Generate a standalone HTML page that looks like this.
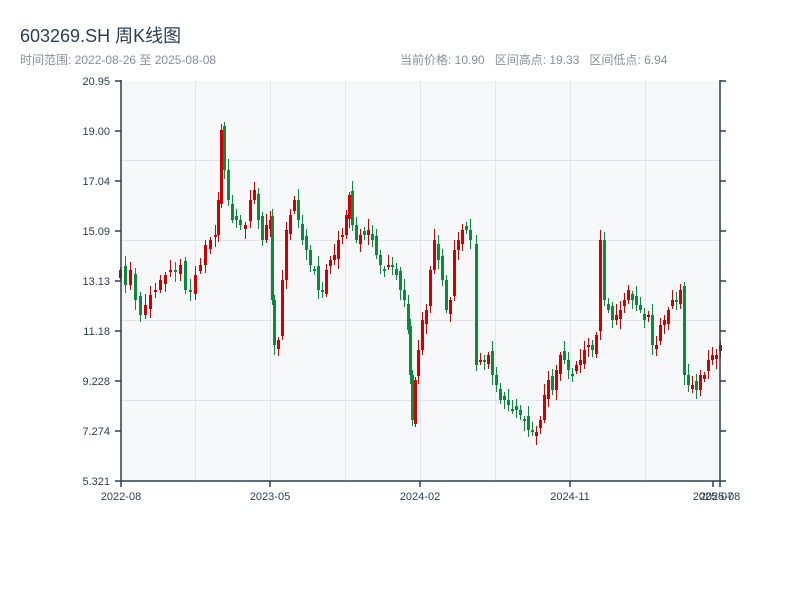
<!DOCTYPE html>
<html><head><meta charset="utf-8"><style>
body{margin:0;width:800px;height:600px;background:#fff;overflow:hidden;font-family:"Liberation Sans","Noto Sans CJK SC",sans-serif;}
.t{position:absolute;left:20px;top:22px;font-size:18px;color:#2c3e50;}
.s{position:absolute;left:20px;top:51px;font-size:12px;color:#8a9099;}
.r{position:absolute;left:400px;top:51px;font-size:12px;color:#8a9099;}
svg{position:absolute;left:0;top:0;}
</style></head><body>
<div class="t">603269.SH 周K线图</div>
<div class="s">时间范围: 2022-08-26 至 2025-08-08</div>
<div class="r">当前价格: 10.90&nbsp;&nbsp; 区间高点: 19.33&nbsp;&nbsp; 区间低点: 6.94</div>
<svg id="c" width="800" height="600" xmlns="http://www.w3.org/2000/svg" font-family="Liberation Sans, sans-serif" font-size="11">
<rect x="121" y="81" width="599" height="400" fill="#f7f8fa"/>
<g stroke="#e2e5ea" stroke-width="1">
<line x1="195.5" y1="81" x2="195.5" y2="481"/><line x1="270.5" y1="81" x2="270.5" y2="481"/><line x1="345.5" y1="81" x2="345.5" y2="481"/><line x1="420.5" y1="81" x2="420.5" y2="481"/><line x1="495.5" y1="81" x2="495.5" y2="481"/><line x1="570.5" y1="81" x2="570.5" y2="481"/><line x1="645.5" y1="81" x2="645.5" y2="481"/>
<line x1="121" y1="160.5" x2="720" y2="160.5"/><line x1="121" y1="240.5" x2="720" y2="240.5"/><line x1="121" y1="320.5" x2="720" y2="320.5"/><line x1="121" y1="400.5" x2="720" y2="400.5"/>
</g>
<g id="k"></g>
<g stroke="#2c3e50" stroke-width="1.5" fill="none">
<line x1="121" y1="80" x2="121" y2="481"/><line x1="720" y1="80" x2="720" y2="481"/><line x1="115" y1="481" x2="726" y2="481"/>
<line x1="115" y1="81" x2="121" y2="81"/><line x1="115" y1="131" x2="121" y2="131"/><line x1="115" y1="181" x2="121" y2="181"/><line x1="115" y1="231" x2="121" y2="231"/><line x1="115" y1="281" x2="121" y2="281"/><line x1="115" y1="331" x2="121" y2="331"/><line x1="115" y1="381" x2="121" y2="381"/><line x1="115" y1="431" x2="121" y2="431"/>
<line x1="720" y1="81" x2="726" y2="81"/><line x1="720" y1="131" x2="726" y2="131"/><line x1="720" y1="181" x2="726" y2="181"/><line x1="720" y1="231" x2="726" y2="231"/><line x1="720" y1="281" x2="726" y2="281"/><line x1="720" y1="331" x2="726" y2="331"/><line x1="720" y1="381" x2="726" y2="381"/><line x1="720" y1="431" x2="726" y2="431"/>
<line x1="121" y1="481" x2="121" y2="487"/><line x1="270" y1="481" x2="270" y2="487"/><line x1="420" y1="481" x2="420" y2="487"/><line x1="570" y1="481" x2="570" y2="487"/><line x1="713" y1="481" x2="713" y2="487"/><line x1="720" y1="481" x2="720" y2="487"/>
</g>
<g fill="#2c3e50" text-anchor="end">
<text x="110" y="85">20.95</text><text x="110" y="135">19.00</text><text x="110" y="185">17.04</text><text x="110" y="235">15.09</text><text x="110" y="285">13.13</text><text x="110" y="335">11.18</text><text x="110" y="385">9.228</text><text x="110" y="435">7.274</text><text x="110" y="485">5.321</text>
</g>
<g fill="#2c3e50" text-anchor="middle">
<text x="121" y="500">2022-08</text><text x="270" y="500">2023-05</text><text x="420" y="500">2024-02</text><text x="570" y="500">2024-11</text><text x="713" y="500">2025-07</text><text x="720" y="500">2025-08</text>
</g>
</svg>
<script>
var p=[[120,270],[125,285],[130,270],[135,300],[140,315],[145,305],[150,295],[155,290],[160,280],[165,275],[170,270],[175,270],[180,265],[185,290],[190,290],[195,275],[200,265],[205,245],[210,240],[215,235],[218,200],[221,130],[224,170],[228,200],[232,220],[236,220],[240,225],[245,225],[250,200],[254,190],[258,220],[262,240],[266,225],[270,220],[272,300],[274,345],[278,340],[282,280],[286,230],[290,215],[294,200],[298,220],[302,240],[306,250],[310,265],[314,270],[318,290],[322,290],[326,270],[330,260],[334,255],[338,240],[342,235],[346,215],[349,195],[352,225],[356,240],[360,235],[364,235],[368,230],[372,240],[376,255],[380,265],[384,270],[388,265],[392,265],[396,275],[400,290],[404,300],[408,330],[410,375],[412,420],[415,380],[418,350],[422,320],[426,310],[430,270],[434,240],[438,260],[442,280],[446,310],[450,300],[454,250],[458,240],[462,230],[466,230],[470,240],[476,365],[480,360],[484,360],[488,355],[492,375],[496,385],[500,400],[504,400],[508,405],[512,410],[516,410],[520,415],[524,420],[528,430],[532,432],[536,432],[540,420],[544,395],[548,380],[552,390],[556,370],[560,355],[564,360],[568,370],[572,375],[576,365],[580,360],[584,350],[588,345],[592,350],[596,335],[600,240],[604,300],[608,310],[612,320],[616,315],[620,310],[624,300],[628,290],[632,300],[636,305],[640,310],[644,320],[648,315],[652,345],[656,345],[660,325],[664,320],[668,310],[672,300],[676,300],[680,290],[684,375],[688,385],[692,385],[696,390],[700,375],[704,375],[708,360],[712,355],[716,355],[720,345]];
var s='',prev=p[0][1]+8;
for(var i=0;i<p.length;i++){var x=p[i][0],c=p[i][1],o=prev;var up=c<o;var col=up?'#d10000':'#0a8a3a';
var t=Math.min(o,c),b=Math.max(o,c);if(b-t<2)b=t+2;var w1=3+(i*7%9),w2=3+(i*5%8);
s+='<line x1="'+(x+0.5)+'" y1="'+(t-w1)+'" x2="'+(x+0.5)+'" y2="'+(b+w2)+'" stroke="'+col+'" stroke-width="1"/>';
s+='<rect x="'+(x-1)+'" y="'+t+'" width="3" height="'+(b-t)+'" fill="'+col+'"/>';prev=c+((i%3)-1)*4;}
document.getElementById('k').innerHTML=s;
</script>
</body></html>
